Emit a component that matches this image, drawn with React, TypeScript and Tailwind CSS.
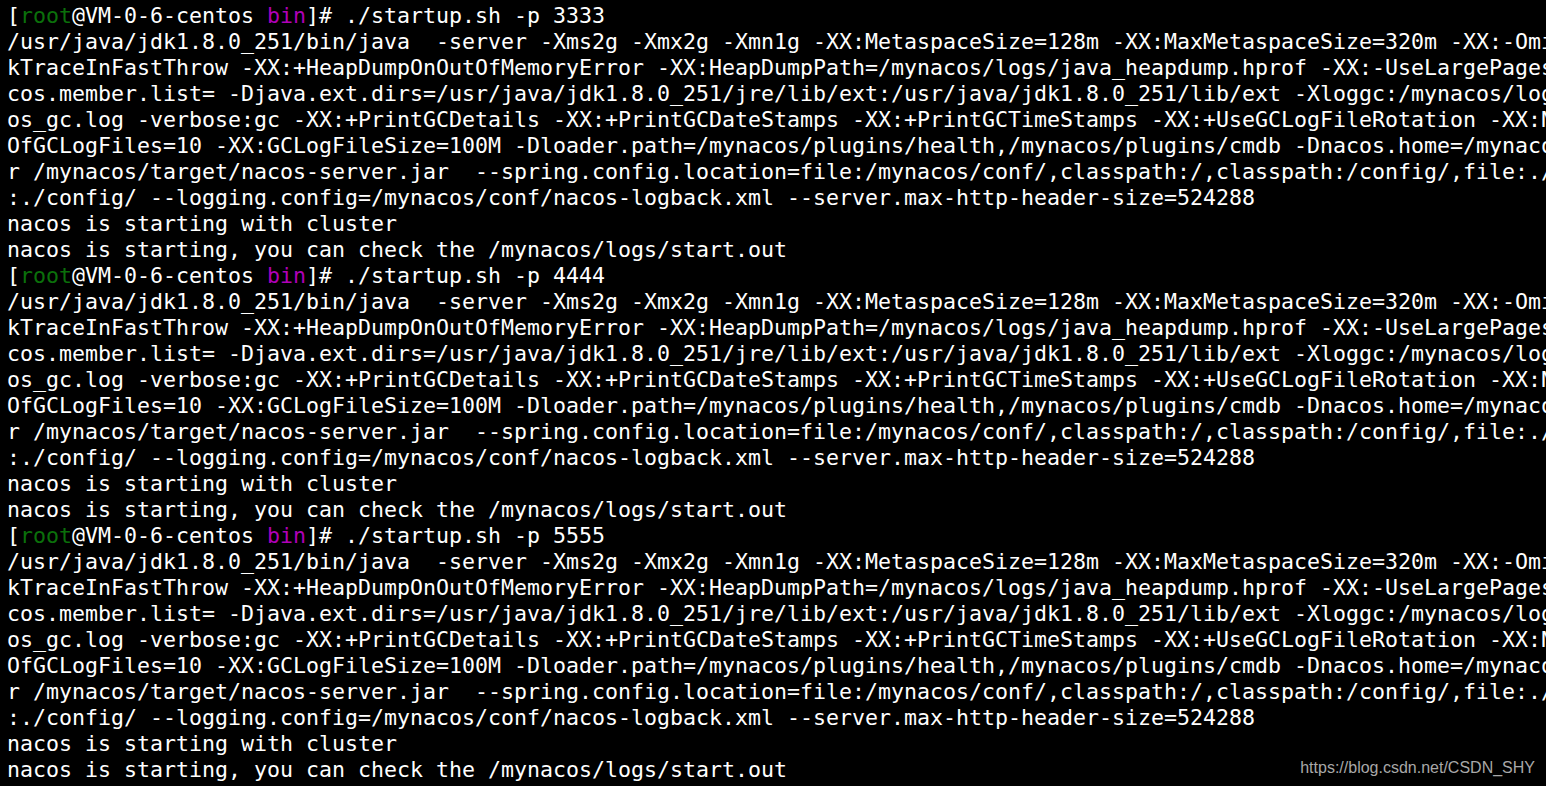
import React from 'react';

const cmdLines = [
  '/usr/java/jdk1.8.0_251/bin/java  -server -Xms2g -Xmx2g -Xmn1g -XX:MetaspaceSize=128m -XX:MaxMetaspaceSize=320m -XX:-OmitStac',
  'kTraceInFastThrow -XX:+HeapDumpOnOutOfMemoryError -XX:HeapDumpPath=/mynacos/logs/java_heapdump.hprof -XX:-UseLargePages -Dna',
  'cos.member.list= -Djava.ext.dirs=/usr/java/jdk1.8.0_251/jre/lib/ext:/usr/java/jdk1.8.0_251/lib/ext -Xloggc:/mynacos/logs/nac',
  'os_gc.log -verbose:gc -XX:+PrintGCDetails -XX:+PrintGCDateStamps -XX:+PrintGCTimeStamps -XX:+UseGCLogFileRotation -XX:Number',
  'OfGCLogFiles=10 -XX:GCLogFileSize=100M -Dloader.path=/mynacos/plugins/health,/mynacos/plugins/cmdb -Dnacos.home=/mynacos -ja',
  'r /mynacos/target/nacos-server.jar  --spring.config.location=file:/mynacos/conf/,classpath:/,classpath:/config/,file:./,file',
  ':./config/ --logging.config=/mynacos/conf/nacos-logback.xml --server.max-http-header-size=524288',
  'nacos is starting with cluster',
  'nacos is starting, you can check the /mynacos/logs/start.out',
];

const ports = ['3333', '4444', '5555'];

const Prompt: React.FC<{ port: string }> = ({ port }) => (
  <div>
    [<span className="text-[#0b700b]">root</span>@VM-0-6-centos{' '}
    <span className="text-[#b000b8]">bin</span>]# ./startup.sh -p {port}
  </div>
);

export default function App() {
  return (
    <div className="relative w-[1546px] h-[786px] bg-black overflow-hidden">
      <div className="pl-[7px] pt-[3px] text-white text-[21.6px] leading-[26px] whitespace-pre font-['DejaVu_Sans_Mono',monospace]">
        {ports.map((p) => (
          <React.Fragment key={p}>
            <Prompt port={p} />
            {cmdLines.map((l, i) => (
              <div key={i}>{l}</div>
            ))}
          </React.Fragment>
        ))}
      </div>
      {/* watermark */}
      <div className="absolute right-[11px] bottom-[10px] text-[#a8a8a8] text-[16px] leading-none font-['Liberation_Sans',sans-serif]">
        https://blog.csdn.net/CSDN_SHY
      </div>
    </div>
  );
}
